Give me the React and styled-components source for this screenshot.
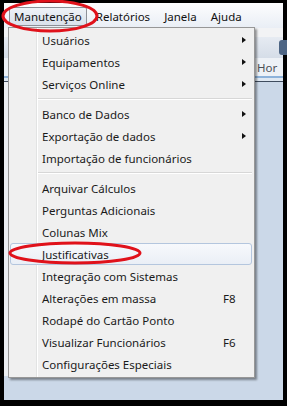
import React from 'react';
import styled, { createGlobalStyle } from 'styled-components';

const GlobalStyle = createGlobalStyle`
  html, body {
    margin: 0;
    padding: 0;
    background: #000;
  }
  body {
    font-family: "Noto Sans", "Open Sans", "DejaVu Sans", sans-serif;
  }
`;

const Screen = styled.div`
  position: relative;
  width: 287px;
  height: 406px;
  box-sizing: border-box;
  padding: 3px 4px 6px 4px;
  background: #000;
  overflow: hidden;
`;

const Window = styled.div`
  height: 100%;
  display: flex;
  flex-direction: column;
  background: #cbd8e8;
`;

const MenuBar = styled.div`
  height: 25px;
  flex: none;
  display: flex;
  align-items: center;
  gap: 4px;
  padding: 1px 0 0 5px;
  box-sizing: border-box;
  background: linear-gradient(#fdfdfe, #e9eef5);
`;

const BarItem = styled.div`
  height: 19px;
  display: flex;
  align-items: center;
  padding: 0 4px;
  box-sizing: border-box;
  font-size: 11.5px;
  color: #111;
  border: 1px solid ${p => (p.$open ? '#8d9198' : 'transparent')};
  border-radius: 2px;
  background: ${p => (p.$open ? 'linear-gradient(#eef2f7, #d9e1eb)' : 'transparent')};
`;

const TopStrip = styled.div`
  height: 9px;
  flex: none;
  background: #f2f3f5;
`;

const Toolbar = styled.div`
  height: 21px;
  flex: none;
  display: flex;
  justify-content: flex-end;
  align-items: center;
  background: linear-gradient(#e6ebf2, #d5dde8);
`;

const ToolButton = styled.div`
  width: 10px;
  height: 15px;
  margin-right: -6px;
  border-radius: 3px;
  background: #4d6584;
`;

const TabRow = styled.div`
  height: 18px;
  flex: none;
  display: flex;
  justify-content: flex-end;
  align-items: center;
  background: #edf1f6;
  font-size: 11.5px;
  color: #4a4f57;
  border-bottom: 2px solid #8db2da;
`;

const TabText = styled.span`
  width: 26px;
  overflow: hidden;
  white-space: nowrap;
`;

const DarkRule = styled.div`
  height: 3px;
  flex: none;
  background: #dfe8f2;
  border-bottom: 1px solid #3f4c5e;
`;

const Workspace = styled.div`
  flex: 1;
  display: flex;
`;

const SidePane = styled.div`
  width: 4px;
  margin-bottom: 24px;
  background: #eceff3;
`;

const Dropdown = styled.div`
  position: absolute;
  left: 8px;
  top: 27px;
  width: 247px;
  box-sizing: border-box;
  padding: 1px 2px 2px 1px;
  border: 1px solid #979797;
  box-shadow: 2px 2px 2px rgba(0, 0, 0, 0.4);
  background: linear-gradient(
    to right,
    #f0f0f0 0,
    #f0f0f0 27px,
    #e2e3e3 27px,
    #e2e3e3 28px,
    #ffffff 28px,
    #ffffff 29px,
    #f0f0f0 29px
  );
`;

const Item = styled.div`
  height: 22px;
  display: grid;
  grid-template-columns: 1fr 14px 14px;
  align-items: center;
  padding-left: 31px;
  box-sizing: border-box;
  font-size: 11.5px;
  color: #1a1a1a;
  border: 1px solid ${p => (p.$hover ? '#b4c6de' : 'transparent')};
  border-radius: 3px;
  background: ${p => (p.$hover ? 'linear-gradient(#f7f9fc, #eaeff6)' : 'transparent')};
`;

const Label = styled.span`
  white-space: nowrap;
`;

const Shortcut = styled.span`
  white-space: nowrap;
`;

const Arrow = styled.span`
  justify-self: center;
  width: 0;
  height: 0;
  border-left: 4px solid #111;
  border-top: 3.5px solid transparent;
  border-bottom: 3.5px solid transparent;
`;

const Separator = styled.div`
  height: 8px;
  display: flex;
  align-items: center;
  padding-left: 28px;

  &::after {
    content: '';
    flex: 1;
    height: 1px;
    background: #d7d7d7;
    border-bottom: 1px solid #fff;
  }
`;

const Marks = styled.svg`
  position: absolute;
  left: 0;
  top: 0;
  pointer-events: none;
`;

const groups = [
  [
    { label: 'Usuários', sub: true },
    { label: 'Equipamentos', sub: true },
    { label: 'Serviços Online', sub: true },
  ],
  [
    { label: 'Banco de Dados', sub: true },
    { label: 'Exportação de dados', sub: true },
    { label: 'Importação de funcionários' },
  ],
  [
    { label: 'Arquivar Cálculos' },
    { label: 'Perguntas Adicionais' },
    { label: 'Colunas Mix' },
    { label: 'Justificativas', hover: true },
    { label: 'Integração com Sistemas' },
    { label: 'Alterações em massa', key: 'F8' },
    { label: 'Rodapé do Cartão Ponto' },
    { label: 'Visualizar Funcionários', key: 'F6' },
    { label: 'Configurações Especiais' },
  ],
];

const App = () => (
  <>
    <GlobalStyle />
    <Screen>
      <Window>
        <MenuBar>
          <BarItem $open>Manutenção</BarItem>
          <BarItem>Relatórios</BarItem>
          <BarItem>Janela</BarItem>
          <BarItem>Ajuda</BarItem>
        </MenuBar>
        <TopStrip />
        <Toolbar>
          <ToolButton />
        </Toolbar>
        <TabRow>
          <TabText>Hor</TabText>
        </TabRow>
        <DarkRule />
        <Workspace>
          <SidePane />
        </Workspace>
      </Window>

      <Dropdown>
        {groups.map((group, gi) => (
          <React.Fragment key={gi}>
            {gi > 0 && <Separator />}
            {group.map(it => (
              <Item key={it.label} $hover={it.hover}>
                <Label>{it.label}</Label>
                <Shortcut>{it.key}</Shortcut>
                {it.sub ? <Arrow /> : <span />}
              </Item>
            ))}
          </React.Fragment>
        ))}
      </Dropdown>

      <Marks width="287" height="406">
        <ellipse cx="50" cy="16" rx="47" ry="15" fill="none" stroke="#e0121b" strokeWidth="3" />
        <ellipse cx="75" cy="253" rx="65" ry="10" fill="none" stroke="#e0121b" strokeWidth="3" />
      </Marks>
    </Screen>
  </>
);

export default App;
